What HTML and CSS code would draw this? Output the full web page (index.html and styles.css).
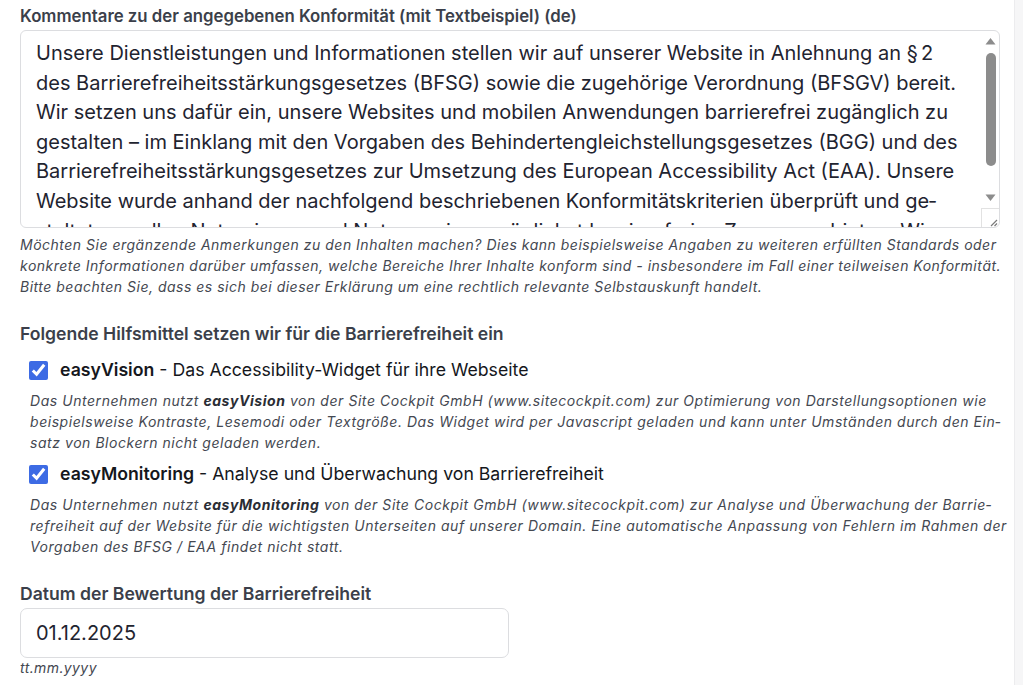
FILE: index.html
```html
<!DOCTYPE html>
<html lang="de">
  <head>
    <meta charset="UTF-8" />
    <meta name="viewport" content="width=device-width, initial-scale=1.0" />
    <title>Barrierefreiheit</title>
    <link rel="stylesheet" href="styles.css">
  </head>

  <body>
    <div class="page">
      <main class="form">
        <div class="field">
          <label class="field-label label-first" for="comment">Kommentare zu der angegebenen Konformität (mit Textbeispiel) (de)</label>
          <div class="textarea-wrap">
            <textarea id="comment" class="field-textarea">Unsere Dienstleistungen und Informationen stellen wir auf unserer Website in Anlehnung an §&#8198;2 des Barrierefreiheitsstärkungsgesetzes (BFSG) sowie die zugehörige Verordnung (BFSGV) bereit. Wir setzen uns dafür ein, unsere Websites und mobilen Anwendungen barrierefrei zugänglich zu gestalten – im Einklang mit den Vorgaben des Behindertengleichstellungsgesetzes (BGG) und des Barrierefreiheitsstärkungsgesetzes zur Umsetzung des European Accessibility Act (EAA). Unsere Website wurde anhand der nachfolgend beschriebenen Konformitätskriterien überprüft und ge&#173;staltet, um allen Nutzerinnen und Nutzern einen möglichst barrierefreien Zugang zu bieten. Wir arbeiten kontinuierlich an Verbesserungen.</textarea>
            <!-- fake classic scrollbar, headless draws overlay ones -->
            <div class="scrollbar" aria-hidden="true">
              <svg class="scroll-arrow" width="15" height="8" viewBox="0 0 15 8"><polygon points="2.5,7.5 12.5,7.5 7.5,1" fill="#8c8c8c" /></svg>
              <div class="scroll-track"><div class="scroll-thumb"></div></div>
              <svg class="scroll-arrow" width="15" height="8" viewBox="0 0 15 8"><polygon points="2.5,0.5 12.5,0.5 7.5,7" fill="#8c8c8c" /></svg>
              <div class="scroll-corner">
                <svg width="18" height="19" viewBox="0 0 18 19"><path d="M9 17 L15 11 M12.5 17 L15 14.5" stroke="#7a7a7a" stroke-width="1.2" fill="none" /></svg>
              </div>
            </div>
          </div>
          <p class="field-help">Möchten Sie ergänzende Anmerkungen zu den Inhalten machen? Dies kann beispielsweise Angaben zu weiteren erfüllten Standards oder konkrete Informationen darüber umfassen, welche Bereiche Ihrer Inhalte konform sind - insbesondere im Fall einer teilweisen Konformität. Bitte beachten Sie, dass es sich bei dieser Erklärung um eine rechtlich relevante Selbstauskunft handelt.</p>
        </div>

        <fieldset class="tools">
          <legend class="field-label">Folgende Hilfsmittel setzen wir für die Barrierefreiheit ein</legend>

          <label class="tool-check">
            <input type="checkbox" checked />
            <span><strong>easyVision</strong> - Das Accessibility-Widget für ihre Webseite</span>
          </label>
          <p class="tool-desc">Das Unternehmen nutzt <strong>easyVision</strong> von der Site Cockpit GmbH (www.sitecockpit.com) zur Optimierung von Darstellungsoptionen wie beispielsweise Kontraste, Lesemodi oder Textgröße. Das Widget wird per Javascript geladen und kann unter Umständen durch den Ein&shy;satz von Blockern nicht geladen werden.</p>

          <label class="tool-check">
            <input type="checkbox" checked />
            <span><strong>easyMonitoring</strong> - Analyse und Überwachung von Barrierefreiheit</span>
          </label>
          <p class="tool-desc">Das Unternehmen nutzt <strong>easyMonitoring</strong> von der Site Cockpit GmbH (www.sitecockpit.com) zur Analyse und Überwachung der Barrie&shy;refreiheit auf der Website für die wichtigsten Unterseiten auf unserer Domain. Eine automatische Anpassung von Fehlern im Rahmen der Vorgaben des BFSG / EAA findet nicht statt.</p>
        </fieldset>

        <div class="field field-date">
          <label class="field-label" for="date">Datum der Bewertung der Barrierefreiheit</label>
          <input id="date" class="field-input" type="text" value="01.12.2025" />
          <p class="field-hint">tt.mm.yyyy</p>
        </div>
      </main>
      <aside class="side"></aside>
    </div>
  </body>
</html>
```

FILE: styles.css
```css
body {
  margin: 0;
  background-color: #fff;
  font-family: Inter, "Noto Sans", sans-serif;
  color: #1f2430;
}

.page {
  display: grid;
  grid-template-columns: 1fr 19px;
  min-height: 685px;
}

.side {
  background-color: #f6f6f7;
  border-left: 1px solid #ececee;
}

.form {
  padding: 6px 4px 0 20px;
}

.field-label {
  display: block;
  font-size: 17.6px;
  font-weight: 600;
  line-height: 20px;
  color: #3b3f4a;
  margin-bottom: 4px;
  padding: 0;
}

.label-first {
  font-size: 16.8px;
}

.textarea-wrap {
  position: relative;
  width: 980px;
}

.field-textarea {
  display: block;
  box-sizing: border-box;
  width: 980px;
  height: 198px;
  margin: 0;
  padding: 8px 30px 8px 15px;
  font: 20px/29.6px Inter, "Noto Sans", sans-serif;
  color: #1f2430;
  border: 1px solid #dcdde0;
  border-radius: 6px;
  overflow: hidden;
  resize: none;
}

.scrollbar {
  position: absolute;
  top: 1px;
  right: 1px;
  bottom: 1px;
  width: 17px;
  display: flex;
  flex-direction: column;
  align-items: center;
  border-top-right-radius: 5px;
  border-bottom-right-radius: 5px;
}

.scroll-arrow {
  display: block;
  margin-top: 6px;
  flex: none;
}

.scroll-track {
  flex: 1;
  width: 15px;
  padding-top: 8px;
  padding-bottom: 27px;
  box-sizing: border-box;
}

.scroll-thumb {
  width: 10px;
  height: 113px;
  margin: 0 auto;
  border-radius: 5px;
  background-color: #8c8c8c;
}

.scroll-track + .scroll-arrow {
  margin-top: 0;
  margin-bottom: 6px;
}

.scroll-corner {
  width: 18px;
  height: 19px;
  box-sizing: border-box;
  border-top: 1px solid #e2e2e2;
  border-left: 1px solid #e2e2e2;
  align-self: flex-end;
}

.scroll-corner svg {
  display: block;
}

.field-help {
  margin: 6px 0 0;
  font-size: 14px;
  font-style: italic;
  line-height: 21px;
  letter-spacing: 0.5px;
  color: #444851;
  width: 985px;
}

.tools {
  border: 0;
  margin: 27px 0 0;
  padding: 0;
  min-width: 0;
}

.tool-check {
  display: flex;
  align-items: center;
  gap: 12px;
  margin: 10px 0 0 9px;
  font-size: 17.7px;
  line-height: 24px;
  color: #15171c;
}

.tool-check strong {
  font-weight: 600;
}

.tool-check input {
  width: 19px;
  height: 19px;
  margin: 0;
  accent-color: #3d6be4;
}

.tool-desc {
  margin: 8px 0 0 10px;
  font-size: 14px;
  font-style: italic;
  line-height: 21px;
  letter-spacing: 0.55px;
  color: #444851;
  width: 980px;
}

.tool-desc strong {
  font-weight: 700;
  color: #2a2d34;
}

.tools .tool-desc + .tool-check {
  margin-top: 9px;
}

.field-date {
  margin-top: 27px;
}

.field-input {
  display: block;
  box-sizing: border-box;
  width: 489px;
  height: 50px;
  margin: 0;
  padding: 0 15px;
  font: 20px Inter, "Noto Sans", sans-serif;
  color: #1f2430;
  border: 1px solid #dcdde0;
  border-radius: 7px;
}

.field-hint {
  margin: 0;
  font-size: 14px;
  font-style: italic;
  line-height: 20px;
  letter-spacing: 0.4px;
  color: #444851;
}
```
